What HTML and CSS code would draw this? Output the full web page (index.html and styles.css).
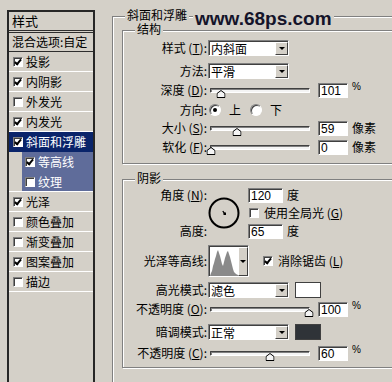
FILE: index.html
```html
<!DOCTYPE html>
<html lang="zh-CN">
<head>
    <meta charset="UTF-8">
    <meta name="viewport" content="width=device-width, initial-scale=1.0">
    <title>图层样式 - 斜面和浮雕</title>
    <link rel="stylesheet" href="styles.css">
</head>
<body>
<div class="dialog">

    <!-- 左侧样式列表 -->
    <div class="style-list">
        <div class="list-head">样式</div>
        <div class="list-blend">混合选项:自定</div>
        <div class="list-item"><span class="check on"></span>投影</div>
        <div class="list-item"><span class="check on"></span>内阴影</div>
        <div class="list-item"><span class="check"></span>外发光</div>
        <div class="list-item"><span class="check on"></span>内发光</div>
        <div class="list-item active"><span class="check on"></span>斜面和浮雕</div>
        <div class="list-item sub"><span class="check on"></span>等高线</div>
        <div class="list-item sub last"><span class="check"></span>纹理</div>
        <div class="list-item"><span class="check on"></span>光泽</div>
        <div class="list-item"><span class="check"></span>颜色叠加</div>
        <div class="list-item"><span class="check"></span>渐变叠加</div>
        <div class="list-item"><span class="check on"></span>图案叠加</div>
        <div class="list-item"><span class="check"></span>描边</div>
    </div>

    <!-- 斜面和浮雕 -->
    <div class="group bevel">
        <div class="group-title">斜面和浮雕</div>

        <div class="group section structure">
            <div class="group-title">结构</div>

            <div class="row gap2">
                <span class="lbl">样式 (<u>T</u>):</span>
                <div class="select"><span class="select-text">内斜面</span><span class="drop"></span></div>
            </div>
            <div class="row gap5">
                <span class="lbl">方法:</span>
                <div class="select"><span class="select-text">平滑</span><span class="drop"></span></div>
            </div>
            <div class="row gap1">
                <span class="lbl">深度 (<u>D</u>):</span>
                <div class="slider"><svg class="thumb" style="left:10%" viewBox="0 0 9 8"><path d="M.5 7.5V3.5L4.5.5 8.5 3.5V7.5Z"/></svg></div>
                <input class="num" value="101" readonly>
                <span class="pct">%</span>
            </div>
            <div class="row gap2">
                <span class="lbl">方向:</span>
                <span class="radio on"></span><span class="radio-text">上</span>
                <span class="radio"></span><span class="radio-text">下</span>
            </div>
            <div class="row">
                <span class="lbl">大小 (<u>S</u>):</span>
                <div class="slider"><svg class="thumb" style="left:27%" viewBox="0 0 9 8"><path d="M.5 7.5V3.5L4.5.5 8.5 3.5V7.5Z"/></svg></div>
                <input class="num" value="59" readonly>
                <span class="unit">像素</span>
            </div>
            <div class="row gap1">
                <span class="lbl">软化 (<u>F</u>):</span>
                <div class="slider"><svg class="thumb" style="left:0%" viewBox="0 0 9 8"><path d="M.5 7.5V3.5L4.5.5 8.5 3.5V7.5Z"/></svg></div>
                <input class="num" value="0" readonly>
                <span class="unit">像素</span>
            </div>
        </div>

        <div class="group section shading">
            <div class="group-title">阴影</div>

            <div class="angle">
                <span class="lbl angle-lbl">角度 (<u>N</u>):</span>
                <svg class="dial" viewBox="0 0 32 32">
                    <circle cx="16" cy="16" r="14.5" fill="none" stroke="#000" stroke-width="2"/>
                    <path d="M16.5 16.5 L14.8 14" stroke="#000" stroke-width="1.3"/>
                    <rect x="15.5" y="15.5" width="2.5" height="2.5" fill="#000"/>
                </svg>
                <div class="angle-field"><input class="num wide" value="120" readonly><span class="unit">度</span></div>
                <div class="global-light"><span class="check"></span><span class="check-text">使用全局光 (<u>G</u>)</span></div>
                <span class="lbl alt-lbl">高度:</span>
                <div class="alt-field"><input class="num wide" value="65" readonly><span class="unit">度</span></div>
            </div>

            <div class="row tall gap5">
                <span class="lbl">光泽等高线:</span>
                <div class="contour">
                    <svg class="contour-pic" viewBox="0 0 28 29">
                        <rect width="28" height="29" fill="#fff"/>
                        <path d="M0 29 L1 26 L2 24 L3 19 L4 16 L5 12 L6 9 L7 5 L8 3 L9 6 L10 9 L11 13 L12 17 L13 19 L14 15 L15 11 L16 8 L17 5 L18 4 L19 7 L20 10 L21 14 L22 18 L23 22 L24 25 L26 27 L28 28 L28 29 Z" fill="#8a8a8a"/>
                    </svg>
                    <span class="drop contour-drop"></span>
                </div>
                <span class="check on aa"></span><span class="check-text">消除锯齿 (<u>L</u>)</span>
            </div>
            <div class="row gap4">
                <span class="lbl">高光模式:</span>
                <div class="select"><span class="select-text">滤色</span><span class="drop"></span></div>
                <span class="swatch"></span>
            </div>
            <div class="row gap1">
                <span class="lbl">不透明度 (<u>O</u>):</span>
                <div class="slider"><svg class="thumb" style="left:100%" viewBox="0 0 9 8"><path d="M.5 7.5V3.5L4.5.5 8.5 3.5V7.5Z"/></svg></div>
                <input class="num" value="100" readonly>
                <span class="pct">%</span>
            </div>
            <div class="row gap5">
                <span class="lbl">暗调模式:</span>
                <div class="select"><span class="select-text">正常</span><span class="drop"></span></div>
                <span class="swatch dark"></span>
            </div>
            <div class="row gap3">
                <span class="lbl">不透明度 (<u>C</u>):</span>
                <div class="slider"><svg class="thumb" style="left:60%" viewBox="0 0 9 8"><path d="M.5 7.5V3.5L4.5.5 8.5 3.5V7.5Z"/></svg></div>
                <input class="num" value="60" readonly>
                <span class="pct">%</span>
            </div>
        </div>
    </div>

    <div class="watermark">www.68ps.com</div>
</div>
</body>
</html>
```

FILE: styles.css
```css
body {
    margin: 0;
    background-color: #d4d0c8;
    font-family: "Noto Sans CJK SC", "Liberation Sans", sans-serif;
    font-size: 12px;
    color: #000;
}
u {
    text-decoration-thickness: 1px;
}
.dialog {
    position: relative;
    display: flex;
    align-items: flex-start;
    width: 392px;
    height: 382px;
    overflow: hidden;
}

/* 左侧样式列表 */
.style-list {
    flex: none;
    width: 88px;
    height: 390px;
    margin: 10px 0 0 7px;
    box-sizing: border-box;
    border: 2px solid #262626;
    border-bottom: none;
    line-height: 18px;
}
.list-head {
    height: 18px;
    padding-left: 3px;
    font-size: 13px;
    border-bottom: 3px double #2e2e2e;
}
.list-blend {
    height: 18px;
    padding-left: 3px;
    border-bottom: 1px solid #2e2e2e;
}
.list-item {
    display: flex;
    align-items: center;
    height: 19px;
    padding-left: 4px;
    border-bottom: 1px solid #fff;
}
.list-item.active {
    background-color: #0a246a;
    color: #fff;
    border-bottom-color: transparent;
}
.list-item.sub {
    padding-left: 16px;
    color: #fff;
    background: linear-gradient(to right, transparent 13px, #5f6c9a 13px);
    border-bottom-color: transparent;
}
.list-item.sub.last {
    border-bottom-color: #fff;
}

/* 复选框 */
.check {
    position: relative;
    flex: none;
    width: 10px;
    height: 10px;
    margin-right: 3px;
    box-sizing: border-box;
    border: 1px solid;
    border-color: #808080 #fff #fff #808080;
    box-shadow: inset 1px 1px 0 #404040;
    background-color: #fff;
}
.check.on::after {
    content: "";
    position: absolute;
    left: 2px;
    top: 0;
    width: 2px;
    height: 5px;
    border: solid #000;
    border-width: 0 2px 2px 0;
    transform: rotate(40deg);
}

/* 分组框 */
.group {
    box-sizing: border-box;
    border: 1px solid #808080;
    box-shadow: inset 1px 1px 0 #fff, 1px 1px 0 #fff;
}
.group-title {
    width: fit-content;
    height: 14px;
    margin: -8px 0 0 12px;
    padding: 1px 2px 0;
    box-sizing: border-box;
    background-color: #d4d0c8;
    font-family: "Liberation Sans", "Noto Sans CJK SC", sans-serif;
    line-height: 13px;
}
.bevel {
    flex: none;
    width: 320px;
    height: 420px;
    margin: 16px 0 0 17px;
}
.section {
    width: 300px;
    margin-left: 9px;
}
.structure {
    margin-top: 7px;
    padding-bottom: 7px;
}
.shading {
    margin-top: 15px;
    padding-bottom: 5px;
}

/* 表单行 */
.row {
    display: flex;
    align-items: center;
    height: 18px;
    line-height: 18px;
}
.row.tall {
    height: 32px;
}
.gap1 { margin-top: 1px; }
.gap2 { margin-top: 2px; }
.gap3 { margin-top: 3px; }
.gap4 { margin-top: 4px; }
.gap5 { margin-top: 5px; }
.lbl {
    flex: none;
    width: 84px;
    text-align: right;
    white-space: nowrap;
}

.select {
    display: flex;
    flex: none;
    width: 81px;
    height: 16px;
    margin-left: 1px;
    padding: 1px 0 0 1px;
    box-sizing: border-box;
    border: 1px solid;
    border-color: #808080 #fff #fff #808080;
    box-shadow: inset 1px 1px 0 #404040;
    background-color: #fff;
}
.select-text {
    flex: 1;
    padding-left: 1px;
    line-height: 13px;
}
.drop {
    display: flex;
    align-items: center;
    justify-content: center;
    flex: none;
    width: 13px;
    box-sizing: border-box;
    border: 1px solid;
    border-color: #fff #404040 #404040 #fff;
    background-color: #d4d0c8;
}
.drop::after {
    content: "";
    border-left: 3px solid transparent;
    border-right: 3px solid transparent;
    border-top: 3px solid #000;
}

.slider {
    position: relative;
    flex: none;
    width: 100px;
    height: 5px;
    margin-left: 3px;
    box-sizing: border-box;
    border: 1px solid;
    border-color: #404040 #fff #fff #404040;
    border-radius: 1px;
    box-shadow: inset 1px 1px 0 #808080;
    background-color: #f4f4f4;
}
.thumb {
    position: absolute;
    top: 1px;
    width: 9px;
    height: 8px;
    transform: translateX(-50%);
    fill: #f4f4f4;
    stroke: #000;
}

.num {
    flex: none;
    width: 30px;
    height: 15px;
    margin: 0 0 0 8px;
    padding: 1px 0 0 2px;
    box-sizing: border-box;
    border: 1px solid;
    border-color: #808080 #fff #fff #808080;
    box-shadow: inset 1px 1px 0 #404040;
    background-color: #fff;
    font: 12px "Liberation Sans", sans-serif;
    color: #000;
    outline: none;
}
.num.wide {
    width: 35px;
}
.pct {
    align-self: flex-start;
    margin-left: 4px;
    font: 10px/12px "Liberation Sans", sans-serif;
}
.unit {
    margin-left: 4px;
}

.radio {
    display: flex;
    align-items: center;
    justify-content: center;
    flex: none;
    width: 12px;
    height: 12px;
    margin-left: 2px;
    box-sizing: border-box;
    border-radius: 50%;
    border: 1px solid;
    border-color: #808080 #fff #fff #808080;
    box-shadow: inset 1px 1px 0 #404040;
    background-color: #fff;
}
.radio + .radio-text + .radio {
    margin-left: 9px;
}
.radio.on::after {
    content: "";
    width: 4px;
    height: 4px;
    border-radius: 50%;
    background-color: #000;
}
.radio-text {
    margin-left: 8px;
}

/* 角度 / 高度 */
.angle {
    display: grid;
    grid-template-columns: 84px 33px auto;
    grid-template-rows: repeat(3, 18px);
    align-items: center;
    line-height: 18px;
}
.angle-lbl { grid-column: 1; grid-row: 1; }
.alt-lbl { grid-column: 1; grid-row: 3; }
.dial {
    grid-column: 2;
    grid-row: 1 / 4;
    width: 32px;
    height: 32px;
    margin-left: 1px;
}
.angle-field, .alt-field, .global-light {
    display: flex;
    align-items: center;
    grid-column: 3;
}
.angle-field { grid-row: 1; }
.global-light { grid-row: 2; }
.alt-field { grid-row: 3; }
.global-light .check {
    margin: 0 0 0 9px;
}
.check-text {
    margin-left: 5px;
}

.contour {
    display: flex;
    flex: none;
    height: 32px;
    margin-left: 1px;
    padding: 1px 0 0 1px;
    box-sizing: border-box;
    border: 1px solid;
    border-color: #808080 #fff #fff #808080;
    box-shadow: inset 1px 1px 0 #404040;
}
.contour-pic {
    width: 28px;
    height: 29px;
}
.contour-drop {
    width: 10px;
}
.check.aa {
    margin: 0 0 0 14px;
}

.swatch {
    flex: none;
    width: 26px;
    height: 16px;
    margin-left: 6px;
    box-sizing: border-box;
    border: 1px solid #404040;
    background-color: #fff;
}
.swatch.dark {
    background-color: #2f3338;
}

.watermark {
    position: absolute;
    left: 193px;
    top: 8px;
    padding: 0 2px;
    background-color: #d4d0c8;
    font: bold 19px/22px "Liberation Sans", sans-serif;
    color: #14142a;
}
```
